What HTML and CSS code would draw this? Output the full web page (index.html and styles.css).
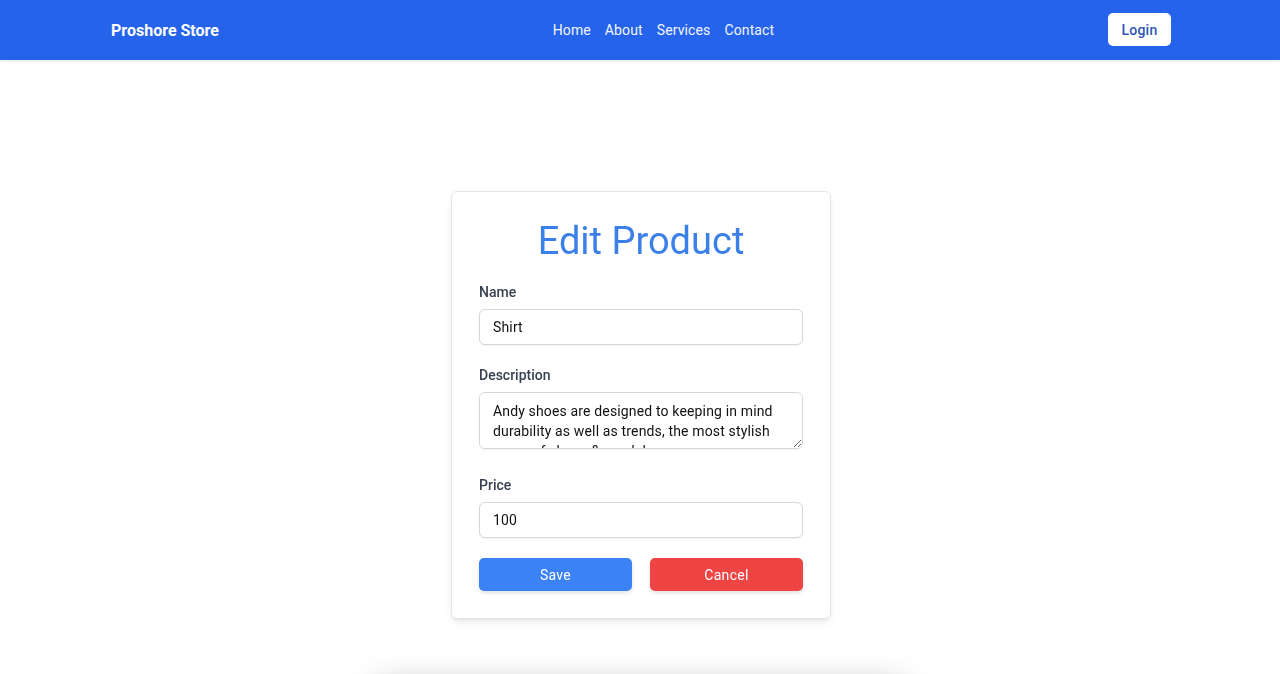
FILE: index.html
```html
<!DOCTYPE html>
<html lang="en">
<head>
<meta charset="utf-8">
<title>Edit Product</title>
<link rel="stylesheet" href="styles.css">
</head>
<body>
<header class="navbar">
  <div class="nav-inner">
    <a class="brand" href="#">Proshore Store</a>
    <nav class="nav-links">
      <a href="#">Home</a>
      <a href="#">About</a>
      <a href="#">Services</a>
      <a href="#">Contact</a>
    </nav>
    <button class="login-btn" type="button">Login</button>
  </div>
</header>
<main class="page">
  <form class="card">
    <h1 class="card-title">Edit Product</h1>
    <div class="field">
      <label class="field-label" for="name">Name</label>
      <input class="field-input" id="name" type="text" value="Shirt">
    </div>
    <div class="field field-textarea">
      <label class="field-label" for="desc">Description</label>
      <textarea class="field-input field-area" id="desc" rows="2">Andy shoes are designed to keeping in mind durability as well as trends, the most stylish range of shoes &amp; sandals</textarea>
    </div>
    <div class="field">
      <label class="field-label" for="price">Price</label>
      <input class="field-input" id="price" type="text" value="100">
    </div>
    <div class="actions">
      <button class="btn btn-save" type="button">Save</button>
      <button class="btn btn-cancel" type="button">Cancel</button>
    </div>
  </form>
  <div class="below-panel"></div>
</main>
</body>
</html>
```
FILE: styles.css
```css
* { box-sizing: border-box; }

html, body {
  margin: 0;
  padding: 0;
  background: #ffffff;
  font-family: Roboto, "Liberation Sans", Arial, sans-serif;
}

.navbar {
  height: 60px;
  background: #2563eb;
  box-shadow: 0 1px 3px rgba(0, 0, 0, 0.12);
  padding: 0 109px 0 111px;
}

.nav-inner {
  height: 60px;
  display: flex;
  align-items: center;
  justify-content: space-between;
}

.brand {
  color: #ffffff;
  font-size: 16px;
  font-weight: 700;
  text-decoration: none;
}

.nav-links {
  display: flex;
  gap: 14px;
}

.nav-links a {
  color: #f3f6ff;
  font-size: 14px;
  font-weight: 400;
  text-decoration: none;
  letter-spacing: 0.12px;
}

.login-btn {
  width: 63px;
  height: 33px;
  margin-top: -1px;
  background: #ffffff;
  border: none;
  border-radius: 5px;
  color: #2f55b9;
  font-family: inherit;
  font-size: 14px;
  font-weight: 500;
  letter-spacing: 0.2px;
  padding: 0;
}

.page {
  height: 614px;
  overflow: hidden;
  padding-top: 131px;
  display: flex;
  flex-direction: column;
  align-items: center;
}

.card {
  width: 380px;
  margin-left: 2px;
  border: 1px solid #e3e5e8;
  border-radius: 6px;
  padding: 27px 27px 27px;
  background: #ffffff;
  box-shadow: 0 4px 8px -2px rgba(0, 0, 0, 0.1), 0 2px 4px -2px rgba(0, 0, 0, 0.06);
}

.card-title {
  margin: 0 0 18px;
  text-align: center;
  color: #3b7fe9;
  font-size: 38px;
  font-weight: 400;
  line-height: 45px;
}

.field {
  margin-bottom: 20px;
}

.field-textarea {
  margin-bottom: 26px;
}

.field-label {
  display: block;
  margin-bottom: 7px;
  color: #374151;
  font-size: 14px;
  font-weight: 500;
  line-height: 20px;
}

.field-input {
  display: block;
  width: 100%;
  height: 36px;
  padding: 7px 13px;
  border: 1px solid #d4d7dc;
  border-radius: 6px;
  box-shadow: 0 1px 2px rgba(0, 0, 0, 0.05);
  color: #111111;
  font-family: inherit;
  font-size: 14px;
  line-height: 20px;
  letter-spacing: 0.15px;
  background: #ffffff;
}

.field-area {
  height: 57px;
  padding: 8px 13px 6px;
  resize: vertical;
}

.actions {
  display: grid;
  grid-template-columns: 1fr 1fr;
  gap: 18px;
  margin-top: 20px;
}

.btn {
  height: 33px;
  border: none;
  border-radius: 5px;
  color: #ffffff;
  font-family: inherit;
  font-size: 14px;
  font-weight: 400;
  letter-spacing: 0.3px;
  box-shadow: 0 2px 4px rgba(0, 0, 0, 0.12);
}

.btn-save { background: #3b82f6; }
.btn-cancel { background: #ef4444; }

.below-panel {
  flex: none;
  width: 530px;
  height: 120px;
  margin-top: 66px;
  background: #ffffff;
  border-radius: 8px;
  box-shadow: 0 0 32px rgba(0, 0, 0, 0.28);
}
```
